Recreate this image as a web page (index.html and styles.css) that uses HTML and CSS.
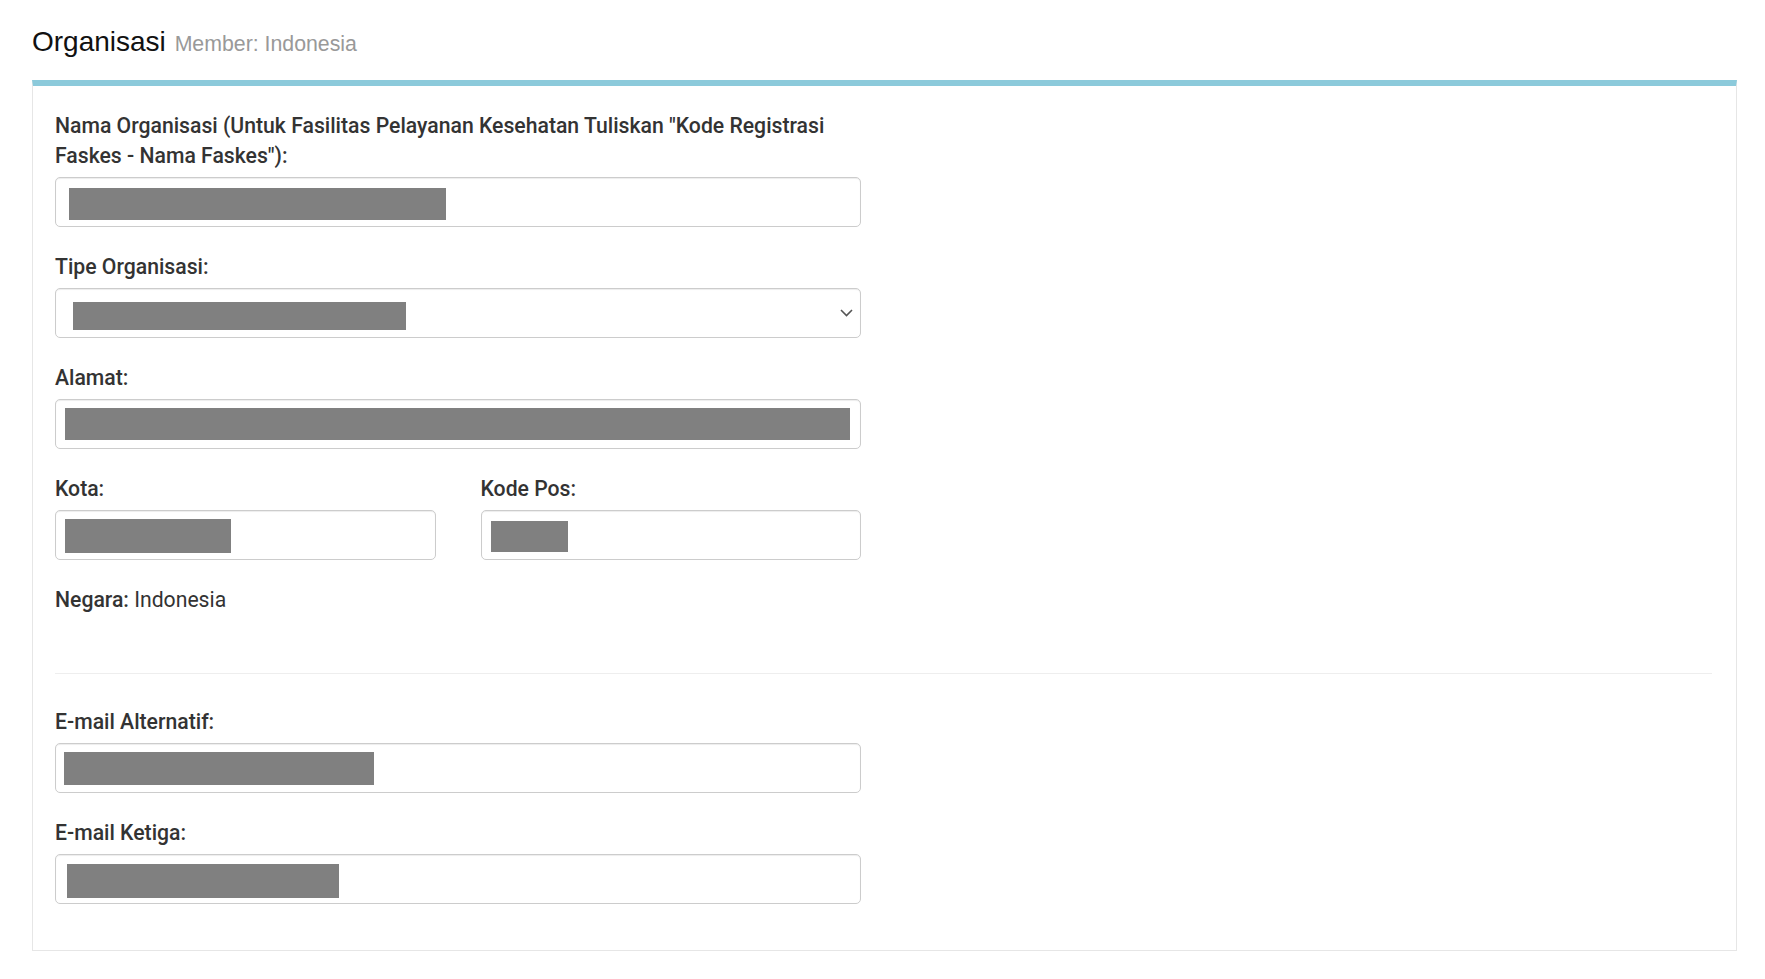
FILE: index.html
```html
<!DOCTYPE html>
<html lang="id">
<head>
<meta charset="utf-8">
<title>Organisasi</title>
<link rel="stylesheet" href="styles.css">
</head>
<body>
<div class="page">
  <h1 class="page-title">Organisasi <small class="page-sub">Member: Indonesia</small></h1>
  <section class="card">
    <div class="form">
      <div class="group">
        <label class="label">Nama Organisasi (Untuk Fasilitas Pelayanan Kesehatan Tuliskan "Kode Registrasi Faskes - Nama Faskes"):</label>
        <div class="field"><span class="redact r-nama"></span></div>
      </div>
      <div class="group">
        <label class="label">Tipe Organisasi:</label>
        <div class="field select"><span class="redact r-tipe"></span>
          <svg class="chev" width="13" height="8" viewBox="0 0 13 8"><polyline points="1,1 6.5,6.5 12,1" fill="none" stroke="#555" stroke-width="1.6"/></svg>
        </div>
      </div>
      <div class="group">
        <label class="label">Alamat:</label>
        <div class="field"><span class="redact r-alamat"></span></div>
      </div>
      <div class="group row">
        <div class="col">
          <label class="label">Kota:</label>
          <div class="field"><span class="redact r-kota"></span></div>
        </div>
        <div class="col">
          <label class="label">Kode Pos:</label>
          <div class="field"><span class="redact r-pos"></span></div>
        </div>
      </div>
      <div class="group">
        <p class="negara"><span class="label-inline">Negara:</span> Indonesia</p>
      </div>
    </div>
    <hr class="divider">
    <div class="form">
      <div class="group">
        <label class="label">E-mail Alternatif:</label>
        <div class="field"><span class="redact r-alt"></span></div>
      </div>
      <div class="group last">
        <label class="label">E-mail Ketiga:</label>
        <div class="field"><span class="redact r-ketiga"></span></div>
      </div>
    </div>
  </section>
</div>
</body>
</html>
```
FILE: styles.css
```css
* { box-sizing: border-box; }
html, body { margin: 0; padding: 0; background: #fff; }
body { font-family: Roboto, "Noto Sans", sans-serif; color: #333; }

.page { padding: 26px 28px 0 32px; }

.page-title {
  margin: 0;
  font-family: "Liberation Sans", Arial, sans-serif;
  font-weight: 400;
  font-size: 28px;
  line-height: 32px;
  color: #111;
}
.page-sub {
  font-size: 21.3px;
  color: #999;
  margin-left: 1px;
}

.card {
  margin-top: 20px;
  border: 1px solid #e6e6e6;
  border-top: 6px solid #8ccadb;
  padding: 25px 24px 46px 22px;
}

.form { width: 806px; }

.group { margin-bottom: 25px; }
.group.last { margin-bottom: 0; }

.label {
  display: block;
  font-size: 21.2px;
  font-weight: 500;
  line-height: 30px;
  color: #333;
  margin-bottom: 6px;
}

.row { display: grid; grid-template-columns: 1fr 1fr; column-gap: 45px; }

.field {
  height: 50px;
  border: 1px solid #ccc;
  border-radius: 5px;
  box-shadow: inset 0 1px 1px rgba(0,0,0,.075);
  display: flex;
  align-items: flex-start;
  position: relative;
}

.redact { display: block; background: #808080; }
.r-nama { margin: 10px 0 0 13px; width: 377px; height: 32px; }
.r-tipe { margin: 13px 0 0 17px; width: 333px; height: 28px; }
.r-alamat { margin: 8px 0 0 9px; width: 785px; height: 32px; }
.r-kota { margin: 8px 0 0 9px; width: 166px; height: 34px; }
.r-pos { margin: 10px 0 0 9px; width: 77px; height: 31px; }
.r-alt { margin: 8px 0 0 8px; width: 310px; height: 33px; }
.r-ketiga { margin: 9px 0 0 11px; width: 272px; height: 34px; }

.chev { position: absolute; right: 7px; top: 20px; }

.negara {
  margin: 0;
  font-size: 21.2px;
  line-height: 30px;
  color: #333;
}
.label-inline { font-weight: 500; }

.divider {
  border: 0;
  border-top: 1px solid #eee;
  margin: 58px 0 33px;
}
```
